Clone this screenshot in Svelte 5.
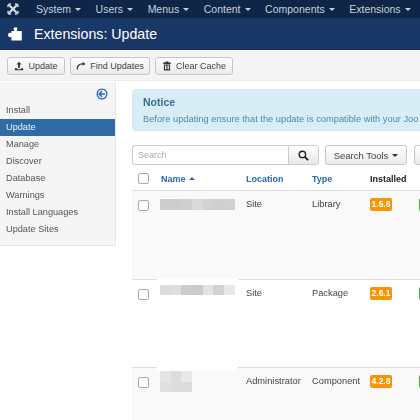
<script>
    const navItems = ["System", "Users", "Menus", "Content", "Components", "Extensions"];
    const sideItems = ["Install", "Update", "Manage", "Discover", "Database", "Warnings", "Install Languages", "Update Sites"];

    // mosaic cells stand in for the pixelated extension names
    const rows = [
        {
            location: "Site", type: "Library", version: "1.5.6", halo: false, shift: 1,
            tiles: [["#cdcdcd", "#cdcdcd", "#cfcfcf", "#dadada", "#d2d2d2", "#cfcfcf", "#d0d0d0"]]
        },
        {
            location: "Site", type: "Package", version: "2.6.1", halo: true, shift: -2,
            tiles: [["#dcdcdc", "#dedede", "#cccccc", "#cbcbcb", "#e3e3e3", "#d2d2d2", "#e8e8e8"]]
        },
        {
            location: "Administrator", type: "Component", version: "4.2.8", halo: true, shift: -4,
            tiles: [
                ["#e4e4e4", "#dcdcdc", "#e8e8e8"],
                ["#e0e0e0", "#dddddd", "#dcdcdc"]
            ]
        }
    ];
</script>

<div class="page">
    <nav class="topnav">
        <svg class="logo" viewBox="0 0 12 12" width="12" height="12">
            <g fill="none" stroke="#d4dce6" stroke-linecap="round">
                <path stroke-width="2.200" d="M3 3 L9 9" />
                <path stroke-width="2.200" d="M9 3 L3 9" />
                <path stroke-width="1.500" d="M1 3.500C.8 1.800 2 .8 3.500 1M8.500 1C10.200.8 11.200 2 11 3.500M11 8.500C11.200 10.200 10 11.200 8.500 11M3.500 11C1.800 11.200.8 10 1 8.500" />
            </g>
        </svg>
        <ul class="menu">
            {#each navItems as item}
                <li>{item}<span class="caret light"></span></li>
            {/each}
        </ul>
    </nav>

    <header class="subhead">
        <svg class="puzzle" viewBox="0 0 15 14" width="15" height="14">
            <path fill="#fff" d="M6 0.500h3.200v2.200c0 .7-.6 1-.6 1.400h5.200v9.400H3.400V9.700c-.5 0-.8.6-1.500.6C.8 10.300 0 9.200 0 8s.8-2.300 1.900-2.300c.7 0 1 .6 1.500.6V4.100h3.200c0-.4-.8-.7-.8-1.500C5.800 1.800 5.600 1 6 .5z" />
        </svg>
        <h1>Extensions: Update</h1>
    </header>

    <div class="toolbar">
        <button class="btn update">
            <svg viewBox="0 0 10 10" width="10" height="10">
                <path fill="#333" d="M5 .8 7.500 3.600H5.900V7H4.100V3.600H2.500zM.8 7.300h2.400v1h3.600v-1h2.400v2H.8z" />
            </svg>
            Update
        </button>
        <button class="btn find">
            <svg viewBox="0 0 10 10" width="10" height="10">
                <path fill="none" stroke="#333" stroke-width="1.200" d="M1.300 8.500C1.100 5 3.200 2.600 6.500 2.800" />
                <path fill="#333" d="M6.500.8 9.500 2.900 6.500 4.800z" />
            </svg>
            Find Updates
        </button>
        <button class="btn clear">
            <svg viewBox="0 0 10 10" width="10" height="10">
                <path fill="#333" d="M3.500.6h3v1h2.300v1.300H1.200V1.600h2.300zM1.900 3.400h6.200v6H1.900z" />
                <path fill="#eee" d="M3 4.500h1v3.800H3zM4.600 4.500h.9v3.800h-.9zM6.100 4.500h1v3.800h-1z" />
            </svg>
            Clear Cache
        </button>
    </div>

    <div class="body">
        <aside class="sidebar">
            <div class="toggle">
                <svg viewBox="0 0 12 12" width="12" height="12">
                    <circle cx="6" cy="6" r="5.500" fill="#2a69b8" />
                    <circle cx="6" cy="6" r="4.200" fill="#f4f6f8" />
                    <path fill="none" stroke="#2a69b8" stroke-width="1.500" d="M6 3 3.200 6 6 9M3.500 6h5.500" />
                </svg>
            </div>
            <ul class="sidelist">
                {#each sideItems as item}
                    <li class:active={item === "Update"}>{item}</li>
                {/each}
            </ul>
        </aside>

        <main class="content">
            <div class="notice">
                <h4>Notice</h4>
                <p>Before updating ensure that the update is compatible with your Joo</p>
            </div>

            <div class="filters">
                <input class="search" type="text" placeholder="Search" />
                <button class="search-btn" aria-label="Search">
                    <svg viewBox="0 0 12 12" width="11" height="11">
                        <circle cx="4.800" cy="4.800" r="3.500" fill="none" stroke="#222" stroke-width="1.500" />
                        <path stroke="#222" stroke-width="2" d="M7.500 7.500 11 11" />
                    </svg>
                </button>
                <button class="btn tools">Search Tools<span class="caret dark"></span></button>
                <button class="btn extra" aria-label="Sort"></button>
            </div>

            <div class="thead grid">
                <span class="check"></span>
                <span class="link">Name<span class="up"></span></span>
                <span class="link">Location</span>
                <span class="link">Type</span>
                <span class="installed">Installed</span>
            </div>

            {#each rows as row, i}
                <div class="row grid" class:odd={i % 2 === 0}>
                    <span class="check"></span>
                    <div class="mosaic" class:halo={row.halo} style="margin-top: {row.shift}px">
                        {#each row.tiles as line}
                            <div class="tile-line">
                                {#each line as colour}
                                    <i style="background: {colour}"></i>
                                {/each}
                            </div>
                        {/each}
                    </div>
                    <span>{row.location}</span>
                    <span>{row.type}</span>
                    <span class="badge">{row.version}</span>
                    <span class="badge green"></span>
                </div>
            {/each}
        </main>
    </div>
</div>

<style>
    :global(body) {
        margin: 0;
        background: #fff;
    }

    .page {
        width: 420px;
        height: 420px;
        overflow: hidden;
        font-family: "Liberation Sans", Arial, sans-serif;
        font-size: 9.300px;
        color: #444;
        filter: blur(0.3px);
    }

    .topnav {
        height: 18px;
        background: #0f2648;
        display: flex;
        align-items: center;
        padding-left: 7px;
    }

    .logo {
        flex: none;
    }

    .menu {
        display: flex;
        list-style: none;
        margin: 0 0 0 17px;
        padding: 0;
        color: #c6d0dd;
        font-size: 10.500px;
        gap: 14.600px;
        white-space: nowrap;
    }

    .menu li {
        display: flex;
        align-items: center;
    }

    .caret {
        display: inline-block;
        margin-left: 4px;
        border-left: 3px solid transparent;
        border-right: 3px solid transparent;
        border-top: 3px solid #333;
    }

    .caret.light {
        border-top-color: #c6d0dd;
    }

    .subhead {
        height: 32px;
        background: #1a3867;
        border-bottom: 1px solid #132c54;
        box-sizing: border-box;
        display: flex;
        align-items: center;
        padding-left: 8px;
        gap: 11px;
    }

    .subhead h1 {
        margin: 0;
        font-size: 14.200px;
        font-weight: normal;
        color: #fff;
    }

    .toolbar {
        height: 31px;
        box-sizing: border-box;
        background: #f4f4f4;
        border-top: 1px solid #fff;
        border-bottom: 1px solid #eee;
        display: flex;
        align-items: center;
        padding: 0 7px;
        gap: 5px;
    }

    .btn {
        height: 18px;
        padding: 0;
        display: flex;
        align-items: center;
        justify-content: center;
        gap: 4px;
        font: 9px "Liberation Sans", Arial, sans-serif;
        color: #444;
        background: linear-gradient(#fff, #eaeaea);
        border: 1px solid #c6c6c6;
        border-radius: 3px;
        white-space: nowrap;
    }

    .update {
        width: 58px;
    }

    .find {
        width: 80px;
    }

    .clear {
        width: 78px;
    }

    .body {
        display: flex;
        align-items: flex-start;
    }

    .sidebar {
        width: 116px;
        flex: none;
        height: 164px;
        background: #f5f5f5;
        border-right: 1px solid #e6e6e6;
        border-bottom: 1px solid #e6e6e6;
        box-sizing: border-box;
        margin-top: 1px;
    }

    .toggle {
        height: 20px;
        display: flex;
        justify-content: flex-end;
        align-items: flex-end;
        padding-right: 7px;
    }

    .toggle svg {
        margin-bottom: 2px;
    }

    .sidelist {
        list-style: none;
        margin: 0;
        padding: 0;
        color: #555;
        font-size: 9.200px;
    }

    .sidelist li {
        height: 17px;
        line-height: 17px;
        padding-left: 6px;
    }

    .sidelist li.active {
        background: #2f6ca5;
        color: #e9f0f7;
    }

    .content {
        margin-left: 16px;
        width: 360px;
        flex: none;
        padding-top: 8px;
    }

    .notice {
        height: 42px;
        box-sizing: border-box;
        background: #d9edf7;
        border: 1px solid #cfe8f3;
        border-radius: 4px;
        padding: 6px 10px;
        color: #4a8cab;
        white-space: nowrap;
        overflow: hidden;
    }

    .notice h4 {
        margin: 0 0 5px;
        font-size: 10.500px;
        font-weight: bold;
        color: #31708f;
        line-height: 12px;
    }

    .notice p {
        margin: 0;
        font-size: 9.300px;
        line-height: 12px;
    }

    .filters {
        display: flex;
        margin-top: 14px;
        height: 20px;
    }

    .search {
        width: 156px;
        box-sizing: border-box;
        height: 20px;
        padding: 0 5px;
        border: 1px solid #ccc;
        border-right: 0;
        border-radius: 3px 0 0 3px;
        font: 9px "Liberation Sans", Arial, sans-serif;
        outline: none;
    }

    .search::placeholder {
        color: #aaa;
    }

    .search-btn {
        width: 31px;
        height: 20px;
        padding: 0;
        display: flex;
        align-items: center;
        justify-content: center;
        background: linear-gradient(#fff, #e8e8e8);
        border: 1px solid #ccc;
        border-radius: 0 3px 3px 0;
    }

    .tools {
        height: 20px;
        margin-left: 6px;
        width: 82px;
        font-size: 9.500px;
        gap: 0;
    }

    .extra {
        height: 20px;
        margin-left: 7px;
        width: 40px;
        flex: none;
    }

    .grid {
        display: grid;
        grid-template-columns: 29px 85px 66px 58px 49px 20px;
    }

    .thead {
        height: 25px;
        box-sizing: border-box;
        padding-top: 2px;
        align-items: center;
        font-weight: bold;
        font-size: 9px;
    }

    .link {
        color: #2a69b8;
    }

    .installed {
        color: #222;
    }

    .up {
        display: inline-block;
        margin-left: 3px;
        vertical-align: 2px;
        border-left: 3px solid transparent;
        border-right: 3px solid transparent;
        border-bottom: 3px solid #2a69b8;
    }

    .check {
        display: block;
        width: 9px;
        height: 9px;
        margin-left: 6px;
        border: 1px solid #a9a9a9;
        border-radius: 2px;
        background: #fff;
    }

    .row {
        height: 88.500px;
        box-sizing: border-box;
        border-top: 1px solid #ddd;
        padding-top: 7px;
        align-content: start;
        line-height: 13px;
    }

    .row .check {
        margin-top: 2px;
    }

    .odd {
        background: #f9f9f9;
    }

    .mosaic {
        position: relative;
        margin-left: -1px;
    }

    .mosaic.halo::before {
        content: "";
        position: absolute;
        left: -3px;
        width: 81px;
        top: -7px;
        height: 7px;
        background: #fff;
    }

    .tile-line {
        display: flex;
        width: fit-content;
    }

    .tile-line i {
        display: block;
        width: 10.700px;
        height: 10.500px;
    }

    .badge {
        width: 22px;
        height: 13px;
        border-radius: 2px;
        background: #f89406;
        color: #fff;
        font-size: 8.500px;
        font-weight: bold;
        line-height: 13px;
        text-align: center;
    }

    .badge.green {
        background: #46a546;
    }
</style>
